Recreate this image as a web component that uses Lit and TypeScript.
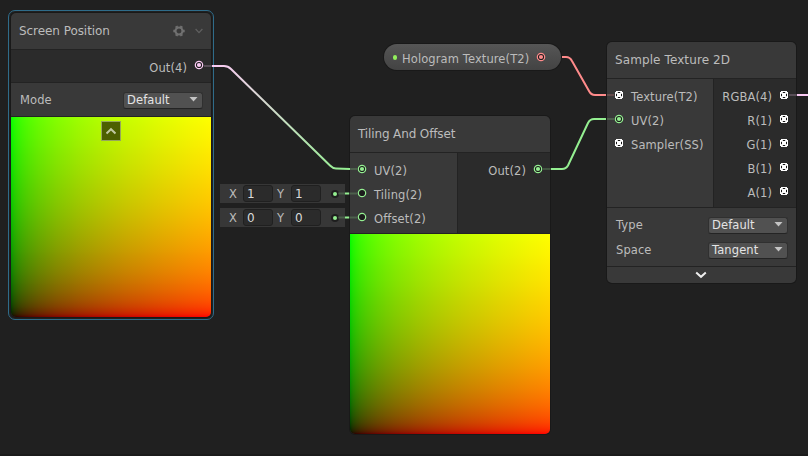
import { LitElement, html, css, svg, nothing } from "lit";
import { customElement, property } from "lit/decorators.js";

type Kind = "ring" | "dot" | "multi";

const GREEN = "#94ef91";
const PINK = "#fbcbf4";
const RED = "#ff8b8b";

// sRGB encoded ramp of a linear 0..1 channel
const ramp = (dir: string, rgb: (v: number) => string) => {
  const stops: string[] = [];
  for (let i = 0; i <= 40; i++) {
    const t = (i / 40) ** 2;
    const v = t <= 0.0031308 ? 12.92 * t : 1.055 * t ** (1 / 2.4) - 0.055;
    stops.push(`${rgb(Math.round(v * 255))} ${(t * 100).toFixed(2)}%`);
  }
  return `linear-gradient(${dir}, ${stops.join(", ")})`;
};
const UV_FILL = [
  ramp("to right", (v) => `rgb(${v},0,0)`),
  ramp("to top", (v) => `rgb(0,${v},0)`),
].join(", ");

@customElement("graph-port")
class GraphPort extends LitElement {
  @property() kind: Kind = "dot";
  @property() color = GREEN;
  static styles = css`
    :host { display: block; width: 10px; height: 10px; flex: none; }
    svg { display: block; }
  `;
  render() {
    const c = this.color;
    return html`<svg width="10" height="10" viewBox="0 0 10 10">
      ${this.kind === "multi"
        ? svg`<path fill="#fff" d="M2 1h6v1h1v6h-1v1h-6v-1h-1v-6h1z"/>
            <path fill="#161616" d="M4 2h2v1h-2zM2 4h1v2h-1zM7 4h1v2h-1zM4 7h2v1h-2z"/>
            <path fill="#161616" fill-opacity=".2" d="M3 2h1v1h-1zM6 2h1v1h-1zM2 3h1v1h-1zM7 3h1v1h-1zM2 6h1v1h-1zM7 6h1v1h-1zM3 7h1v1h-1zM6 7h1v1h-1z"/>`
        : svg`<circle cx="5" cy="5" r="3.7" fill="#1c1c1c" stroke=${c} stroke-width="1.2"/>
            ${this.kind === "dot" ? svg`<circle cx="5" cy="5" r="2.1" fill=${c}/>` : nothing}`}
    </svg>`;
  }
}

@customElement("graph-select")
class GraphSelect extends LitElement {
  @property() label = "";
  @property() value = "";
  static styles = css`
    :host { display: flex; align-items: center; justify-content: space-between; height: 16px; }
    .box { box-sizing: border-box; width: 80px; height: 17px; border: 1px solid #303030; border-bottom-color: #242424;
      border-radius: 3px; background: #515151; color: #e4e4e4; display: flex; align-items: center;
      justify-content: space-between; padding: 0 4px 0 3px; }
    svg { display: block; margin-top: -1px; }
  `;
  render() {
    return html`<span>${this.label}</span>
      <div class="box"><span>${this.value}</span>
        <svg width="9" height="5" viewBox="0 0 9 5"><path d="M0.5 0h8L4.5 4.6z" fill="#c4c4c4"/></svg>
      </div>`;
  }
}

@customElement("app-root")
class AppRoot extends LitElement {
  static styles = css`
    :host { display: block; position: relative; width: 808px; height: 456px; overflow: hidden; background: #202020;
      font: 11.5px/14px "DejaVu Sans", sans-serif; letter-spacing: 0.1px; color: #bcbcbc; }
    .node { position: absolute; box-sizing: border-box; border-radius: 5px; overflow: hidden; background: #393939;
      box-shadow: 0 0 0 1px #191919; }
    .screen { left: 11px; top: 13px; width: 200px; }
    .tiling { left: 350px; top: 116px; width: 200px; }
    .sample { left: 607px; top: 42px; width: 189px; }
    .selection { position: absolute; left: 8px; top: 10px; width: 204px; height: 308px; border: 1px solid #2f6c8a; border-radius: 7px; }
    .head { height: 36px; display: flex; align-items: center; padding: 0 8px; border-bottom: 1px solid #232323;
      font-size: 12px; letter-spacing: -0.13px; }
    .screen .head { letter-spacing: -0.06px; }
    .sample .head { letter-spacing: 0.1px; }
    .head .icons { margin-left: auto; display: flex; align-items: center; gap: 10px; }
    .ports { display: flex; border-bottom: 1px solid #232323; }
    .in { background: #393939; border-right: 1px solid #232323; box-sizing: border-box; }
    .out { background: #2b2b2b; flex: 1; }
    .in, .out { padding: 5px 7px 3px; }
    .in { padding-right: 0; }
    .row { display: flex; height: 24px; align-items: center; gap: 7px; }
    .row span { padding-top: 2px; }
    .row graph-port { margin-top: -2px; }
    .out .row { justify-content: flex-end; }
    .screen .out { padding: 4px 7px 4px; }
    .screen .row span { padding-top: 4px; }
    .tiling .in { width: 108px; }
    .sample .in { width: 107px; }
    .mode { border-bottom: 1px solid #232323; padding: 9px 8px 8px 9px; }
    .options { border-bottom: 1px solid #232323; padding: 9px 8px 8px 9px; display: flex; flex-direction: column; gap: 9px; }
    .foot { height: 16px; display: flex; align-items: center; justify-content: center; padding-right: 2px; }
    .preview { height: 200px; background-blend-mode: screen; display: flex; justify-content: center; }
    .fold { box-sizing: border-box; width: 20px; height: 20px; margin-top: 4px; background: #4c5f00; border: 1px solid #97a65c;
      display: flex; align-items: center; justify-content: center; }
    .pill { position: absolute; left: 384px; top: 44px; width: 177px; height: 26px; box-sizing: border-box; border-radius: 13px;
      background: linear-gradient(#565656, #434343); box-shadow: 0 0 0 1px #191919; display: flex; align-items: center; padding: 0 15px 0 9px; }
    .pill i { width: 4px; height: 5px; border-radius: 2px; background: #92ee5c; margin-right: 5px; }
    .pill span { padding-top: 3px; }
    .pill graph-port { margin-left: auto; }
    .slot { position: absolute; left: 220px; width: 125px; height: 19px; box-sizing: border-box; background: #373737;
      display: flex; align-items: center; padding-left: 9px; letter-spacing: 0; }
    .slot label { width: 14px; }
    .slot b { font-weight: normal; box-sizing: border-box; width: 30px; height: 17px; line-height: 16px; padding-left: 3px; border: 1px solid #202020;
      border-radius: 3px; background: #2b2b2b; color: #dadada; margin-right: 4px; font-size: 12px; }
    .slot i { margin-left: auto; margin-right: 6px; width: 8px; height: 8px; border-radius: 4px; background: #1e1e1e;
      display: grid; place-items: center; }
    .slot i::before { content: ""; width: 4px; height: 4px; border-radius: 2px; background: #94ef91; }
    .s1 { top: 184px; } .s2 { top: 208px; }
    .wires { position: absolute; left: 0; top: 0; }
    .edge { position: absolute; left: 0; bottom: 0; width: 808px; height: 2px; background: #1b1b1b; }
  `;

  row(label: string, kind: Kind, color = GREEN, out = false) {
    const p = html`<graph-port .kind=${kind} .color=${color}></graph-port>`;
    return html`<div class="row">${out ? nothing : p}<span>${label}</span>${out ? p : nothing}</div>`;
  }

  slotBox(cls: string, v: string) {
    return html`<div class="slot ${cls}"><label>X</label><b>${v}</b><label>Y</label><b>${v}</b><i></i></div>`;
  }

  render() {
    return html`
      <div class="edge"></div>
      <div class="selection"></div>
      <div class="node screen">
        <div class="head">Screen Position
          <div class="icons">
            <svg width="12" height="12" viewBox="0 0 12 12"><circle cx="6" cy="6" r="3.5" fill="none" stroke="#707070" stroke-width="2.1"/>
              <path d="M10 6h1.700M8 9.460l.8 1.350M4 9.460l-.8 1.350M2 6H.3M4 2.540l-.8-1.350M8 2.540l.8-1.350" stroke="#707070" stroke-width="2.600" fill="none"/></svg>
            <svg width="8" height="6" viewBox="0 0 8 6"><path d="M.6 1l3.4 3.6L7.4 1" fill="none" stroke="#606060" stroke-width="1.2"/></svg>
          </div>
        </div>
        <div class="ports"><div class="out">${this.row("Out(4)", "dot", PINK, true)}</div></div>
        <div class="mode"><graph-select label="Mode" value="Default"></graph-select></div>
        <div class="preview" style="background-image:${UV_FILL}">
          <div class="fold"><svg width="12" height="8" viewBox="0 0 12 8"><path d="M1.5 6.4L6 2.2l4.5 4.2" fill="none" stroke="#c0c8a0" stroke-width="2"/></svg></div>
        </div>
      </div>

      <div class="node tiling">
        <div class="head">Tiling And Offset</div>
        <div class="ports">
          <div class="in">${this.row("UV(2)", "dot")}${this.row("Tiling(2)", "ring")}${this.row("Offset(2)", "ring")}</div>
          <div class="out">${this.row("Out(2)", "dot", GREEN, true)}</div>
        </div>
        <div class="preview" style="background-image:${UV_FILL}"></div>
      </div>

      <div class="node sample">
        <div class="head">Sample Texture 2D</div>
        <div class="ports">
          <div class="in">${this.row("Texture(T2)", "multi")}${this.row("UV(2)", "dot")}${this.row("Sampler(SS)", "multi")}</div>
          <div class="out">${["RGBA(4)", "R(1)", "G(1)", "B(1)", "A(1)"].map((l) => this.row(l, "multi", GREEN, true))}</div>
        </div>
        <div class="options">
          <graph-select label="Type" value="Default"></graph-select>
          <graph-select label="Space" value="Tangent"></graph-select>
        </div>
        <div class="foot"><svg width="12" height="8" viewBox="0 0 12 8"><path d="M1.2 1.6L6 5.8l4.8-4.2" fill="none" stroke="#eee" stroke-width="2"/></svg></div>
      </div>

      <div class="pill"><i></i><span>Hologram Texture(T2)</span><graph-port kind="dot" .color=${RED}></graph-port></div>
      ${this.slotBox("s1", "1")}${this.slotBox("s2", "0")}

      <svg class="wires" width="808" height="456" viewBox="0 0 808 456" fill="none" stroke-width="2">
        <defs><linearGradient id="w" gradientUnits="userSpaceOnUse" x1="212" y1="66" x2="350" y2="168">
          <stop offset="0" stop-color=${PINK}/><stop offset="1" stop-color=${GREEN}/></linearGradient></defs>
        <path stroke="url(#w)" d="M212 66h12q4 0 7 3L330 165.500q3 3 6 3L350 169"/>
        <path stroke=${GREEN} d="M551 169h11q4 0 6-3.500L588 123q2-4 6-4h12"/>
        <path stroke=${RED} d="M562 57h4q4 0 6 4L589 91q2 4 6 4h11"/>
        <path stroke=${PINK} d="M797 95h11"/>
        <path stroke=${GREEN} d="M345 193.500h4M345 217.500h4"/>
        <g stroke-opacity=".22">
          <path stroke=${PINK} d="M204 66h8M789 95h8"/>
          <path stroke=${GREEN} d="M350 169h7M338 193.500h7M349 193.500h8M338 217.500h7M349 217.500h8M543 169h8M607 119h7"/>
          <path stroke=${RED} d="M607 95h7"/>
        </g>
      </svg>
    `;
  }
}
